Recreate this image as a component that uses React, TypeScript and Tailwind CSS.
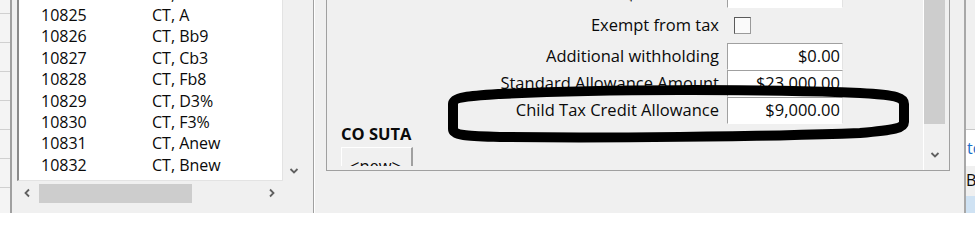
const FONT = "font-['Open_Sans',sans-serif]";

const LIST_ROWS = [
  { id: '10824', name: 'CT, Fedtotals2' },
  { id: '10825', name: 'CT, A' },
  { id: '10826', name: 'CT, Bb9' },
  { id: '10827', name: 'CT, Cb3' },
  { id: '10828', name: 'CT, Fb8' },
  { id: '10829', name: 'CT, D3%' },
  { id: '10830', name: 'CT, F3%' },
  { id: '10831', name: 'CT, Anew' },
  { id: '10832', name: 'CT, Bnew' },
];

function Chevron({ dir }: { dir: 'left' | 'right' | 'down' }) {
  const d =
    dir === 'left'
      ? 'M6 1.5 L2.5 5 L6 8.5'
      : dir === 'right'
        ? 'M3 1.5 L6.5 5 L3 8.5'
        : 'M1.5 3 L5 6.5 L8.5 3';
  return (
    <svg width="10" height="10" viewBox="0 0 10 10">
      <path d={d} fill="none" stroke="#606060" strokeWidth="1.8" />
    </svg>
  );
}

function TextBox({ value }: { value: string }) {
  return (
    <div className="w-[116px] h-[27px] shrink-0 bg-white border border-t-[#a0a0a0] border-l-[#a0a0a0] border-r-[#e3e3e3] border-b-[#ffffff] flex items-center justify-end pr-[2px] leading-none">
      {value}
    </div>
  );
}

function FieldRow({ label, children, className }: { label: string; children: React.ReactNode; className: string }) {
  return (
    <div className={`w-[516px] flex items-center justify-end gap-[8px] ${className}`}>
      <span className="whitespace-nowrap">{label}</span>
      {children}
    </div>
  );
}

export default function App() {
  return (
    <div className={`relative w-[975px] h-[213px] overflow-hidden bg-[#f0f0f0] flex text-[16px] text-[#0a0a0a] ${FONT}`}>
      {/* grid strip at far left */}
      <div className="w-[10px] shrink-0 h-full bg-[#f4f4f4] flex flex-col">
        <div className="h-[14px] shrink-0 border-b border-[#d0d0d0]" />
        {Array.from({ length: 7 }).map((_, i) => (
          <div key={i} className="h-[29px] shrink-0 border-b border-[#d0d0d0]" />
        ))}
      </div>
      <div className="w-[2px] shrink-0 h-full bg-[#a0a0a0]" />
      <div className="w-[5px] shrink-0" />

      {/* list box */}
      <div className="w-[296px] shrink-0 h-full flex flex-col">
        <div className="h-[183px] flex">
          <div className="w-[266px] h-[181px] bg-white border-l-2 border-l-[#8a8a8a] border-b border-r border-[#e3e3e3] overflow-hidden">
            <div className="mt-[-17px]">
              {LIST_ROWS.map((r) => (
                <div key={r.id} className="flex h-[21.4px] items-center leading-none whitespace-nowrap">
                  <span className="w-[133px] shrink-0 pl-[22px]">{r.id}</span>
                  <span>{r.name}</span>
                </div>
              ))}
            </div>
          </div>
          <div className="w-[22px] flex flex-col justify-end items-center pb-[7px]">
            <Chevron dir="down" />
          </div>
        </div>
        <div className="h-[20px] w-[266px] flex items-center">
          <div className="w-[22px] flex justify-center">
            <Chevron dir="left" />
          </div>
          <div className="w-[153px] h-[19px] bg-[#cdcdcd]" />
          <div className="flex-1" />
          <div className="w-[22px] flex justify-center">
            <Chevron dir="right" />
          </div>
        </div>
      </div>

      <div className="w-[2px] shrink-0 h-full bg-[#a0a0a0] border-r border-white" />
      <div className="w-[11px] shrink-0" />

      {/* details group */}
      <div className="w-[624px] shrink-0 h-[171px] border-l border-r border-b border-[#a0a0a0] flex text-[16.5px]">
        <div className="flex-1 h-[166px] overflow-hidden">
          <div className="flex flex-col">
            <FieldRow label="Allowances - $1000 value" className="h-[26px] mt-[-19px]">
              <TextBox value="0" />
            </FieldRow>
            <FieldRow label="Exempt from tax" className="h-[36px]">
              <div className="w-[116px] shrink-0 flex items-center pl-[7px]">
                <div className="w-[17px] h-[17px] bg-[#fafafa] border border-t-[#5a5a5a] border-l-[#5a5a5a] border-r-[#9a9a9a] border-b-[#9a9a9a]" />
              </div>
            </FieldRow>
            <FieldRow label="Additional withholding" className="h-[27px]">
              <TextBox value="$0.00" />
            </FieldRow>
            <FieldRow label="Standard Allowance Amount" className="h-[27px]">
              <TextBox value="$23,000.00" />
            </FieldRow>
            <FieldRow label="Child Tax Credit Allowance" className="h-[27px]">
              <TextBox value="$9,000.00" />
            </FieldRow>
            <div className="pl-[14px] h-[20px] leading-[20px] font-bold">CO SUTA</div>
            <div className="ml-[14px] mt-[3px] w-[72px] h-[24px] border-t border-l border-white border-r-2 border-r-[#a0a0a0] bg-[#f0f0f0] pl-[8px] pt-[10px] leading-none">
              &lt;new&gt;
            </div>
          </div>
        </div>
        <div className="w-[26px] h-full border-l border-white flex flex-col">
          <div className="w-[21px] h-[124px] bg-[#cdcdcd]" />
          <div className="flex-1 flex items-end justify-center pb-[10px] pr-[4px]">
            <Chevron dir="down" />
          </div>
        </div>
      </div>

      <div className="w-[14px] shrink-0" />
      {/* neighbouring window */}
      <div className="w-[11px] shrink-0 h-full border-l-2 border-[#a8a8a8] flex flex-col overflow-hidden">
        <div className="h-[130px] bg-[#f0f0f0] border-b border-[#c8c8c8]" />
        <div className="h-[36px] bg-white pl-[1px] flex items-center text-[#1a6fc9] leading-none">to</div>
        <div className="h-[30px] bg-[#f0f0f0] pt-[6px] leading-none">Bo</div>
        <div className="flex-1 bg-[#cfe2f3]" />
      </div>

      {/* hand-drawn highlight */}
      <svg className="absolute left-0 top-0 pointer-events-none" width="975" height="213" viewBox="0 0 975 213">
        <path
          d="M453 112 L453 104 C453 97 470 96 500 94 C600 89 760 89 860 93 C898 95 904 98 904 104 L904 122 C904 128 895 130 860 133 C760 137 600 138 500 137 C470 136 453 136 453 129 Z"
          fill="none"
          stroke="#000"
          strokeWidth="10"
          strokeLinejoin="round"
        />
      </svg>
    </div>
  );
}
